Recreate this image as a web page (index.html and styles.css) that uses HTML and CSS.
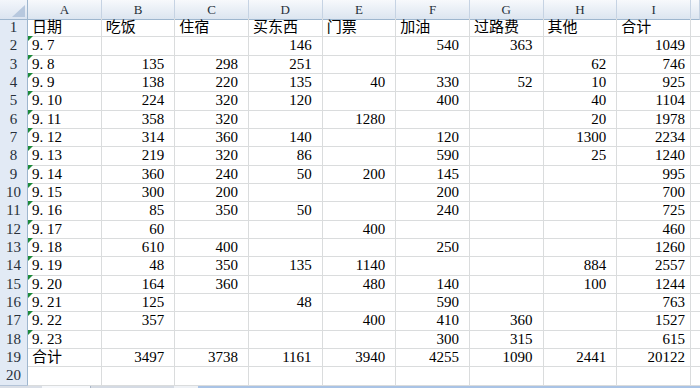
FILE: index.html
```html
<!DOCTYPE html>
<html lang="zh">
<head>
<meta charset="utf-8">
<title>Sheet1</title>
<link rel="stylesheet" href="styles.css">
</head>
<body>
<div class="sheet">
  <div class="r hr">
    <div class="corner"></div><div class="ch">A</div><div class="ch">B</div><div class="ch">C</div><div class="ch">D</div><div class="ch">E</div><div class="ch">F</div><div class="ch">G</div><div class="ch">H</div><div class="ch">I</div><div class="ch"></div>
  </div>
  <div class="r">
    <div class="rh">1</div><div class="c t">日期</div><div class="c t">吃饭</div><div class="c t">住宿</div><div class="c t">买东西</div><div class="c t">门票</div><div class="c t">加油</div><div class="c t">过路费</div><div class="c t">其他</div><div class="c t">合计</div><div class="c"></div>
  </div>
  <div class="r">
    <div class="rh">2</div><div class="c t g">9<span class="p">.</span>7</div><div class="c"></div><div class="c"></div><div class="c">146</div><div class="c"></div><div class="c">540</div><div class="c">363</div><div class="c"></div><div class="c i">1049</div><div class="c"></div>
  </div>
  <div class="r">
    <div class="rh">3</div><div class="c t g">9<span class="p">.</span>8</div><div class="c">135</div><div class="c">298</div><div class="c">251</div><div class="c"></div><div class="c"></div><div class="c"></div><div class="c">62</div><div class="c i">746</div><div class="c"></div>
  </div>
  <div class="r">
    <div class="rh">4</div><div class="c t g">9<span class="p">.</span>9</div><div class="c">138</div><div class="c">220</div><div class="c">135</div><div class="c">40</div><div class="c">330</div><div class="c">52</div><div class="c">10</div><div class="c i">925</div><div class="c"></div>
  </div>
  <div class="r">
    <div class="rh">5</div><div class="c t g">9<span class="p">.</span>10</div><div class="c">224</div><div class="c">320</div><div class="c">120</div><div class="c"></div><div class="c">400</div><div class="c"></div><div class="c">40</div><div class="c i">1104</div><div class="c"></div>
  </div>
  <div class="r">
    <div class="rh">6</div><div class="c t g">9<span class="p">.</span>11</div><div class="c">358</div><div class="c">320</div><div class="c"></div><div class="c">1280</div><div class="c"></div><div class="c"></div><div class="c">20</div><div class="c i">1978</div><div class="c"></div>
  </div>
  <div class="r">
    <div class="rh">7</div><div class="c t g">9<span class="p">.</span>12</div><div class="c">314</div><div class="c">360</div><div class="c">140</div><div class="c"></div><div class="c">120</div><div class="c"></div><div class="c">1300</div><div class="c i">2234</div><div class="c"></div>
  </div>
  <div class="r">
    <div class="rh">8</div><div class="c t g">9<span class="p">.</span>13</div><div class="c">219</div><div class="c">320</div><div class="c">86</div><div class="c"></div><div class="c">590</div><div class="c"></div><div class="c">25</div><div class="c i">1240</div><div class="c"></div>
  </div>
  <div class="r">
    <div class="rh">9</div><div class="c t g">9<span class="p">.</span>14</div><div class="c">360</div><div class="c">240</div><div class="c">50</div><div class="c">200</div><div class="c">145</div><div class="c"></div><div class="c"></div><div class="c i">995</div><div class="c"></div>
  </div>
  <div class="r">
    <div class="rh">10</div><div class="c t g">9<span class="p">.</span>15</div><div class="c">300</div><div class="c">200</div><div class="c"></div><div class="c"></div><div class="c">200</div><div class="c"></div><div class="c"></div><div class="c i">700</div><div class="c"></div>
  </div>
  <div class="r">
    <div class="rh">11</div><div class="c t g">9<span class="p">.</span>16</div><div class="c">85</div><div class="c">350</div><div class="c">50</div><div class="c"></div><div class="c">240</div><div class="c"></div><div class="c"></div><div class="c i">725</div><div class="c"></div>
  </div>
  <div class="r">
    <div class="rh">12</div><div class="c t g">9<span class="p">.</span>17</div><div class="c">60</div><div class="c"></div><div class="c"></div><div class="c">400</div><div class="c"></div><div class="c"></div><div class="c"></div><div class="c i">460</div><div class="c"></div>
  </div>
  <div class="r">
    <div class="rh">13</div><div class="c t g">9<span class="p">.</span>18</div><div class="c">610</div><div class="c">400</div><div class="c"></div><div class="c"></div><div class="c">250</div><div class="c"></div><div class="c"></div><div class="c i">1260</div><div class="c"></div>
  </div>
  <div class="r">
    <div class="rh">14</div><div class="c t g">9<span class="p">.</span>19</div><div class="c">48</div><div class="c">350</div><div class="c">135</div><div class="c">1140</div><div class="c"></div><div class="c"></div><div class="c">884</div><div class="c i">2557</div><div class="c"></div>
  </div>
  <div class="r">
    <div class="rh">15</div><div class="c t g">9<span class="p">.</span>20</div><div class="c">164</div><div class="c">360</div><div class="c"></div><div class="c">480</div><div class="c">140</div><div class="c"></div><div class="c">100</div><div class="c i">1244</div><div class="c"></div>
  </div>
  <div class="r">
    <div class="rh">16</div><div class="c t g">9<span class="p">.</span>21</div><div class="c">125</div><div class="c"></div><div class="c">48</div><div class="c"></div><div class="c">590</div><div class="c"></div><div class="c"></div><div class="c i">763</div><div class="c"></div>
  </div>
  <div class="r">
    <div class="rh">17</div><div class="c t g">9<span class="p">.</span>22</div><div class="c">357</div><div class="c"></div><div class="c"></div><div class="c">400</div><div class="c">410</div><div class="c">360</div><div class="c"></div><div class="c i">1527</div><div class="c"></div>
  </div>
  <div class="r">
    <div class="rh">18</div><div class="c t g">9<span class="p">.</span>23</div><div class="c"></div><div class="c"></div><div class="c"></div><div class="c"></div><div class="c">300</div><div class="c">315</div><div class="c"></div><div class="c i">615</div><div class="c"></div>
  </div>
  <div class="r">
    <div class="rh">19</div><div class="c t">合计</div><div class="c">3497</div><div class="c">3738</div><div class="c">1161</div><div class="c">3940</div><div class="c">4255</div><div class="c">1090</div><div class="c">2441</div><div class="c i">20122</div><div class="c"></div>
  </div>
  <div class="r">
    <div class="rh">20</div><div class="c"></div><div class="c"></div><div class="c"></div><div class="c"></div><div class="c"></div><div class="c"></div><div class="c"></div><div class="c"></div><div class="c"></div><div class="c"></div>
  </div>
  <div class="tabs">
    <div class="seg s1"></div><div class="seg s2"></div><div class="seg s3"></div><div class="seg s4"></div><div class="seg s5"></div>
  </div>
</div>
</body>
</html>
```

FILE: styles.css
```css
html, body {
  margin: 0;
  padding: 0;
}
body {
  width: 700px;
  height: 388px;
  overflow: hidden;
  background: #ffffff;
  font-family: "Liberation Serif", "Noto Sans CJK SC", serif;
  color: #000;
}
.sheet {
  display: flex;
  flex-direction: column;
  height: 388px;
}
.r {
  display: grid;
  grid-template-columns: 28px repeat(9, 73.67px) 1fr;
  height: 18.33px;
  flex: none;
}
.r.hr {
  height: 18px;
}
.corner {
  position: relative;
  background: linear-gradient(#f3f6fb, #dbe4f0);
  border-right: 1px solid #9eb6ce;
  border-bottom: 1px solid #9eb6ce;
  box-sizing: border-box;
}
.corner::after {
  content: "";
  position: absolute;
  right: 2px;
  bottom: 2px;
  border-left: 13px solid transparent;
  border-bottom: 12px solid #b7c8de;
}
.ch {
  background: linear-gradient(#f7f9fc, #dce5f0);
  border-right: 1px solid #c6d3e3;
  border-bottom: 1px solid #9eb6ce;
  box-sizing: border-box;
  font-size: 13px;
  line-height: 18px;
  text-align: center;
  padding-top: 1px;
  color: #27303a;
}
.rh {
  background: #e2eaf5;
  border-right: 1px solid #9eb6ce;
  border-bottom: 1px solid #c6d3e3;
  box-sizing: border-box;
  font-size: 15px;
  line-height: 18.33px;
  text-align: center;
  color: #27303a;
}
.c {
  position: relative;
  border-right: 1px solid #dadcdd;
  border-bottom: 1px solid #dadcdd;
  box-sizing: border-box;
  font-size: 15px;
  line-height: 18.33px;
  text-align: right;
  padding: 0 10px 0 4px;
  white-space: nowrap;
  overflow: hidden;
}
.c.i {
  padding-right: 5px;
}
.c.t {
  text-align: left;
  padding-left: 4px;
  padding-right: 0;
}
.p {
  display: inline-block;
  width: 7.4px;
}
.c.g::before {
  content: "";
  position: absolute;
  left: 0;
  top: 0;
  border-top: 5px solid #1d8a3a;
  border-right: 5px solid transparent;
}
.tabs {
  flex: 1;
  display: flex;
  border-top: 1px solid #b4c4d8;
}
.seg {
  height: 100%;
}
.s1 { width: 42px; background: #d9dee6; }
.s2 { width: 48px; background: #f6f8fb; }
.s3 { width: 83px; background: #d4dae3; border-left: 1px solid #a9b6c8; }
.s4 { width: 24px; background: #eef1f5; }
.s5 { flex: 1; background: #a9c3e5; }
```
